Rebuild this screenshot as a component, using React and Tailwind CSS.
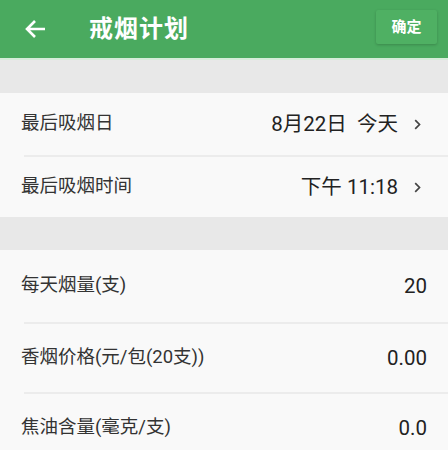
import React from "react";

const font = { fontFamily: '"Roboto", "Noto Sans CJK SC", sans-serif' };

function Row({ label, value, arrow, h }) {
  return (
    <div className={`flex items-center pl-[21px] ${h}`}>
      <span className="text-[18.5px] text-[#333]">{label}</span>
      <span className="ml-auto text-[20.5px] text-[#222] whitespace-pre">{value}</span>
      {arrow ? (
        <svg className="ml-[16px] mr-[27px]" width="7" height="11" viewBox="0 0 7 11">
          <path d="M1.2 1.2 L5.5 5.5 L1.2 9.8" fill="none" stroke="#444" strokeWidth="1.7" />
        </svg>
      ) : (
        <span className="w-[21px]" />
      )}
    </div>
  );
}

function Divider() {
  return <div className="ml-[24px] h-[2px] bg-[#ececec]" />;
}

export default function App() {
  return (
    <div className="w-[448px] h-[450px] overflow-hidden bg-[#f9f9f9]" style={font}>
      <div className="h-[58px] bg-[#4aaa5f] flex items-center">
        <svg className="ml-[24px]" width="22" height="20" viewBox="0 0 22 20">
          <path d="M21 10 H3 M11 2 L3 10 L11 18" fill="none" stroke="#fff" strokeWidth="2.6" />
        </svg>
        <span className="ml-[43px] text-[24px] font-bold text-white tracking-[1px]">戒烟计划</span>
        <button className="ml-auto mr-[11px] w-[61px] h-[34px] mb-[4px] bg-[#4fb063] shadow-[0_1px_3px_rgba(0,0,0,0.2)] rounded-[2px] text-white text-[15px] font-bold">
          确定
        </button>
      </div>
      <div className="h-[2px] bg-[#d5ecd9]" />
      <div className="h-[33px] bg-[#e8e8e8]" />
      <div className="bg-[#f9f9f9]">
        <Row label="最后吸烟日" value="8月22日  今天" arrow h="h-[62px]" />
        <Divider />
        <Row label="最后吸烟时间" value="下午 11:18" arrow h="h-[60px]" />
      </div>
      <div className="h-[33px] bg-[#e8e8e8]" />
      <div className="bg-[#f9f9f9]">
        <Row label="每天烟量(支)" value="20" h="h-[72px]" />
        <Divider />
        <Row label="香烟价格(元/包(20支))" value="0.00" h="h-[68px]" />
        <Divider />
        <Row label="焦油含量(毫克/支)" value="0.0" h="h-[68px]" />
      </div>
    </div>
  );
}
